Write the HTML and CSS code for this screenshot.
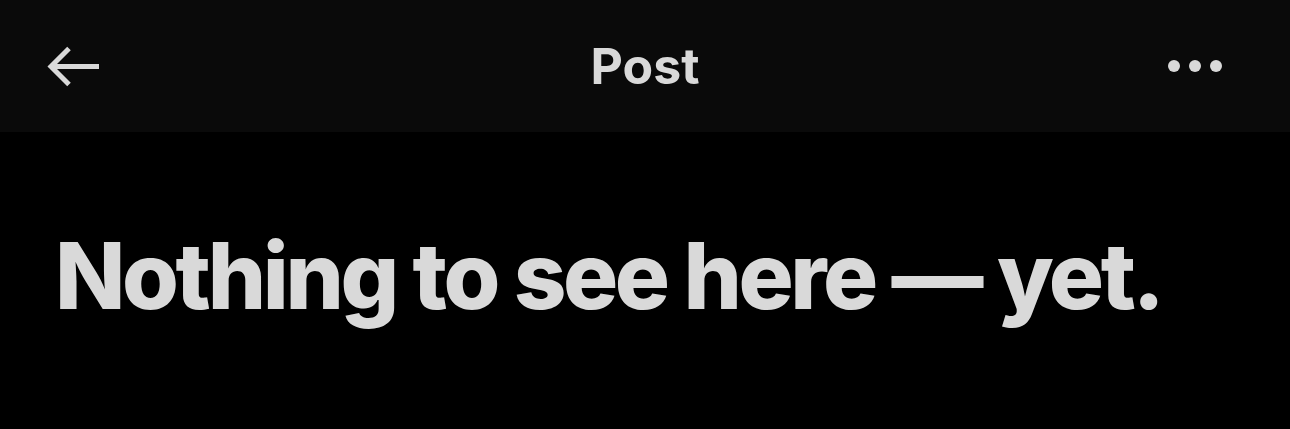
FILE: index.html
```html
<!DOCTYPE html>
<html>
<head>
<meta charset="utf-8">
<link rel="stylesheet" href="styles.css">
</head>
<body>
<header class="topbar">
  <div class="back">
    <svg width="56" height="48" viewBox="0 0 56 48"><path d="M54 24.5H6 M24 6.5 L6 24.5 L24 42.5" fill="none" stroke="#d9d9d9" stroke-width="5"/></svg>
  </div>
  <div class="title">Post</div>
  <div class="more">
    <span class="dot"></span><span class="dot"></span><span class="dot"></span>
  </div>
</header>
<main class="content">
  <h1 class="empty">Nothing to see here — yet.</h1>
</main>
</body>
</html>
```
FILE: styles.css
```css
html, body { margin: 0; padding: 0; background: #000; }
body { font-family: Inter, "Liberation Sans", sans-serif; color: #d9d9d9; }
.topbar {
  height: 132px;
  background: #0a0a0a;
  display: grid;
  grid-template-columns: 1fr auto 1fr;
  align-items: center;
  padding: 0 45px;
}
.back { display: flex; width: 56px; height: 48px; }
.title { font-size: 50px; font-weight: 700; letter-spacing: 0; }
.more { display: flex; gap: 9px; justify-self: end; margin-right: 23px; }
.dot { width: 12px; height: 12px; border-radius: 50%; background: #d9d9d9; }
.content { padding: 0 0 0 55px; }
.empty {
  margin: 89px 0 0 0;
  font-size: 92px;
  font-weight: 800;
  letter-spacing: -3.4px;
  line-height: 1.2;
}
```
